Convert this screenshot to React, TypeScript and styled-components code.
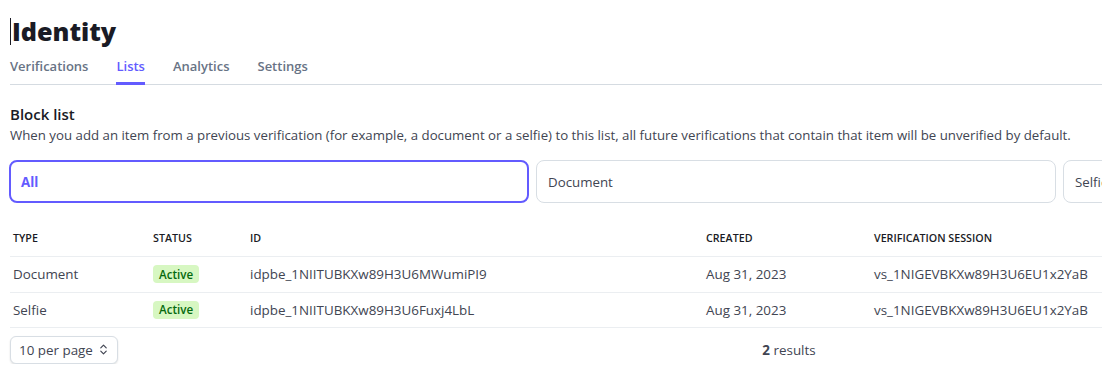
import React from "react";
import styled, { createGlobalStyle } from "styled-components";
import { ChevronsUpDown } from "lucide-react";

const Global = createGlobalStyle`
  html, body { margin: 0; padding: 0; overflow: hidden; background: #ffffff; }
  body { font-family: "Open Sans", "Noto Sans", sans-serif; color: #414552; }
  * { box-sizing: border-box; }
`;

const Page = styled.div`
  width: 1582px;
  padding: 0 0 0 10px;
  display: flex;
  flex-direction: column;
`;

const Title = styled.h1`
  margin: 0;
  padding-top: 12px;
  height: 50px;
  font-size: 25.2px;
  font-weight: 800;
  line-height: 36px;
  color: #1a1b25;
  display: flex;
  align-items: center;
  &::before {
    content: "";
    display: inline-block;
    width: 1px;
    height: 27px;
    background: #1a1b25;
    margin-right: 1px;
  }
`;

const Tabs = styled.nav`
  display: flex;
  gap: 28px;
  border-bottom: 1px solid #d5dbe1;
  height: 35px;
`;

const Tab = styled.div<{ $active?: boolean }>`
  font-size: 13px;
  font-weight: 600;
  line-height: 20px;
  padding-top: 6px;
  color: ${(p) => (p.$active ? "#635bff" : "#687385")};
  border-bottom: 3px solid ${(p) => (p.$active ? "#635bff" : "transparent")};
  margin-bottom: -1px;
`;

const Section = styled.section`
  padding-top: 19px;
  display: flex;
  flex-direction: column;
`;

const Heading = styled.h2`
  margin: 0;
  font-size: 15px;
  font-weight: 600;
  line-height: 21px;
  color: #1a1b25;
`;

const Desc = styled.p`
  margin: 0;
  font-size: 13.25px;
  line-height: 20px;
  color: #414552;
`;

const Cards = styled.div`
  display: grid;
  grid-template-columns: repeat(3, 520px);
  gap: 7px;
  margin-top: 15px;
  margin-left: -1px;
`;

const Card = styled.div<{ $active?: boolean }>`
  height: 43px;
  border-radius: 8px;
  border: ${(p) => (p.$active ? "2px solid #635bff" : "1px solid #d8dee4")};
  padding: 0 ${(p) => (p.$active ? "10px" : "11px")};
  display: flex;
  align-items: center;
  font-size: 13.3px;
  font-weight: ${(p) => (p.$active ? 700 : 400)};
  color: ${(p) => (p.$active ? "#635bff" : "#414552")};
`;

const Table = styled.table`
  margin-top: 18px;
  width: 1572px;
  border-collapse: collapse;
  table-layout: fixed;
`;

const Th = styled.th<{ $w: number }>`
  width: ${(p) => p.$w}px;
  text-align: left;
  font-size: 10.7px;
  font-weight: 600;
  color: #1a1b25;
  padding: 0 0 0 3px;
  height: 35px;
  border-bottom: 1px solid #ebeef1;
  text-transform: uppercase;
`;

const Td = styled.td<{ $h?: number }>`
  font-size: 13.4px;
  color: #414552;
  padding: 0 0 0 3px;
  height: ${(p) => p.$h ?? 36}px;
  border-bottom: 1px solid #ebeef1;
  white-space: nowrap;
`;

const Badge = styled.span`
  display: inline-flex;
  align-items: center;
  height: 18px;
  padding: 0 6px;
  border-radius: 4px;
  background: #d7f7c2;
  color: #05690d;
  font-size: 11.6px;
  font-weight: 600;
`;

const Footer = styled.div`
  display: grid;
  grid-template-columns: 1fr auto 1fr;
  align-items: center;
  margin-top: 8px;
  height: 28px;
  padding-right: 14px;
`;

const Select = styled.button`
  justify-self: start;
  display: inline-flex;
  align-items: center;
  gap: 4px;
  height: 28px;
  padding: 0 7px 0 8px;
  border: 1px solid #d8dee4;
  border-radius: 6px;
  background: #fff;
  box-shadow: 0 1px 2px rgba(0, 0, 0, 0.12);
  font-family: inherit;
  font-size: 13.4px;
  font-weight: 500;
  color: #414552;
`;

const Results = styled.div`
  font-size: 13.4px;
  color: #414552;
  b { font-weight: 700; color: #414552; }
`;

const rows = [
  {
    type: "Document",
    id: "idpbe_1NIITUBKXw89H3U6MWumiPI9",
    created: "Aug 31, 2023",
    session: "vs_1NIGEVBKXw89H3U6EU1x2YaB",
    h: 36,
  },
  {
    type: "Selfie",
    id: "idpbe_1NIITUBKXw89H3U6Fuxj4LbL",
    created: "Aug 31, 2023",
    session: "vs_1NIGEVBKXw89H3U6EU1x2YaB",
    h: 35,
  },
];

export default function App() {
  return (
    <>
      <Global />
      <Page>
        <Title>Identity</Title>
        <Tabs>
          <Tab>Verifications</Tab>
          <Tab $active>Lists</Tab>
          <Tab>Analytics</Tab>
          <Tab>Settings</Tab>
        </Tabs>
        <Section>
          <Heading>Block list</Heading>
          <Desc>
            When you add an item from a previous verification (for example, a document or a selfie) to this list, all future verifications that contain that item will be unverified by default.
          </Desc>
          <Cards>
            <Card $active>All</Card>
            <Card>Document</Card>
            <Card>Selfie</Card>
          </Cards>
          <Table>
            <thead>
              <tr>
                <Th $w={140}>Type</Th>
                <Th $w={97}>Status</Th>
                <Th $w={456}>ID</Th>
                <Th $w={168}>Created</Th>
                <Th $w={711}>Verification session</Th>
              </tr>
            </thead>
            <tbody>
              {rows.map((r) => (
                <tr key={r.id}>
                  <Td $h={r.h}>{r.type}</Td>
                  <Td $h={r.h}>
                    <Badge>Active</Badge>
                  </Td>
                  <Td $h={r.h}>{r.id}</Td>
                  <Td $h={r.h}>{r.created}</Td>
                  <Td $h={r.h}>{r.session}</Td>
                </tr>
              ))}
            </tbody>
          </Table>
          <Footer>
            <Select>
              10 per page
              <ChevronsUpDown size={13} strokeWidth={2.2} />
            </Select>
            <Results>
              <b>2</b> results
            </Results>
            <div />
          </Footer>
        </Section>
      </Page>
    </>
  );
}
